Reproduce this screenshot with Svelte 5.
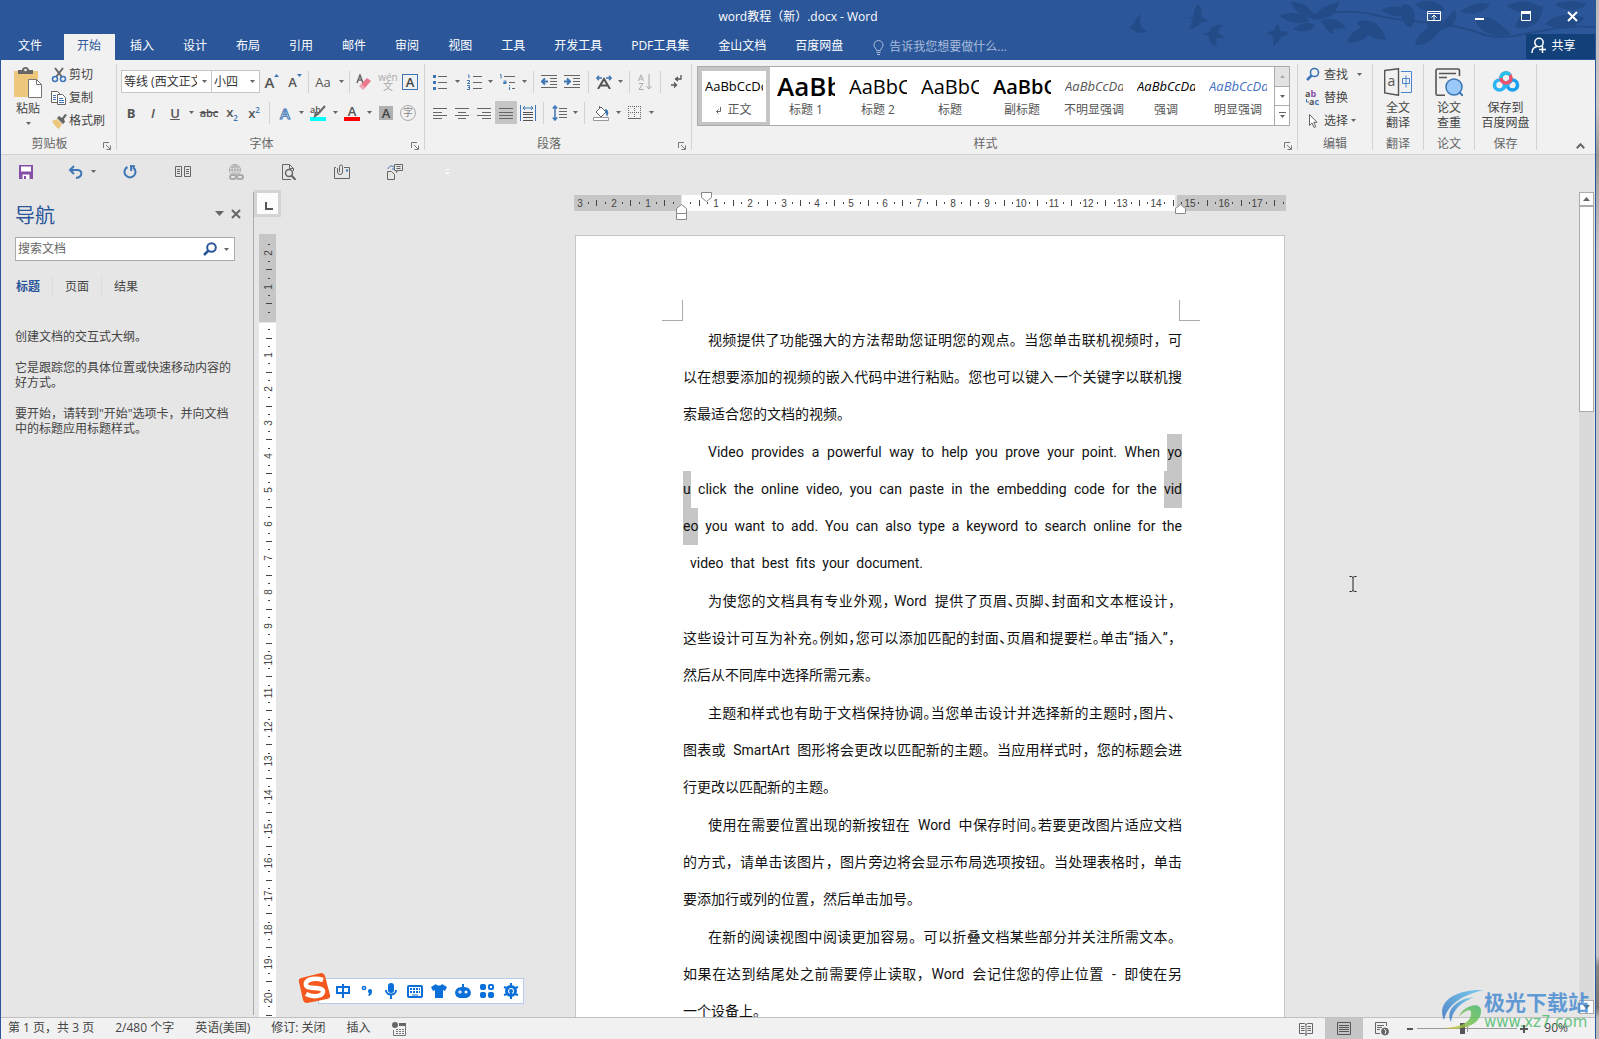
<script>
  const tabs = ['插入', '设计', '布局', '引用', '邮件', '审阅', '视图', '工具', '开发工具', 'PDF工具集', '金山文档', '百度网盘'];

  const styles = [
    { label: '正文', sample: 'AaBbCcDd', kind: 'normal' },
    { label: '标题 1', sample: 'AaBb', kind: 'h1' },
    { label: '标题 2', sample: 'AaBbC', kind: 'h2' },
    { label: '标题', sample: 'AaBbC', kind: 'h2' },
    { label: '副标题', sample: 'AaBbC', kind: 'sub' },
    { label: '不明显强调', sample: 'AaBbCcDd', kind: 'em soft' },
    { label: '强调', sample: 'AaBbCcDd', kind: 'em' },
    { label: '明显强调', sample: 'AaBbCcDd', kind: 'em blue' }
  ];

  // Pixels per centimetre at 90 % zoom
  const CM = 33.85;

  // Builds quarter dots, half lines and numbers between two positions in cm
  function marks(from, to) {
    const out = [];
    for (let q = Math.ceil(from * 4); q <= to * 4; q++) {
      if (q === 0) continue;
      const kind = q % 4 === 0 ? 'num' : q % 2 === 0 ? 'line' : 'dot';
      out.push({ at: Math.round((q / 4) * CM), kind, n: Math.abs(q / 4) });
    }
    return out;
  }
  const hMarks = marks(-3.05, 17.8);
  const vMarks = marks(-2.3, 24);

  // ~x~ marks half-width punctuation, [x] marks selected text
  const paragraphs = [
    [
      '视频提供了功能强大的方法帮助您证明您的观点。当您单击联机视频时，可',
      '以在想要添加的视频的嵌入代码中进行粘贴。您也可以键入一个关键字以联机搜',
      '索最适合您的文档的视频。'
    ],
    [
      'Video provides a powerful way to help you prove your point. When [yo]',
      '[u] click the online video, you can paste in the embedding code for the [vid]',
      '[eo] you want to add. You can also type a keyword to search online for the',
      '  video  that  best  fits  your  document.'
    ],
    [
      '为使您的文档具有专业外观~，~ Word  提供了页眉~、~页脚~、~封面和文本框设计，',
      '这些设计可互为补充~。~例如~，~您可以添加匹配的封面~、~页眉和提要栏~。~单击“插入”，',
      '然后从不同库中选择所需元素。'
    ],
    [
      '主题和样式也有助于文档保持协调~。~当您单击设计并选择新的主题时~，~图片、',
      '图表或  SmartArt  图形将会更改以匹配新的主题。当应用样式时，您的标题会进',
      '行更改以匹配新的主题。'
    ],
    [
      '使用在需要位置出现的新按钮在  Word  中保存时间~。~若要更改图片适应文档',
      '的方式，请单击该图片，图片旁边将会显示布局选项按钮。当处理表格时，单击',
      '要添加行或列的位置，然后单击加号。'
    ],
    [
      '在新的阅读视图中阅读更加容易。可以折叠文档某些部分并关注所需文本。',
      '如果在达到结尾处之前需要停止读取，Word  会记住您的停止位置  -  即使在另',
      '一个设备上。'
    ]
  ];

  function parse(line) {
    return line
      .split(/(~.~|\[[^\]]+\])/)
      .filter((s) => s !== '')
      .map((s) => {
        if (s[0] === '~') return { t: s[1], c: 'half' };
        if (s[0] === '[') return { t: s.slice(1, -1), c: 'sel' };
        return { t: s, c: '' };
      });
  }
</script>

{#snippet arrow()}
  <svg class="arr" width="5" height="3" viewBox="0 0 5 3" aria-hidden="true"><path d="M0 0h5L2.500 3z" fill="#666" /></svg>
{/snippet}

{#snippet launcher()}
  <button class="launch" aria-label="更多设置">
    <svg width="8" height="8" viewBox="0 0 8 8"><path d="M.5 6V.5H6M3 3l4 4M7.500 3.500v4h-4" fill="none" stroke="#777" /></svg>
  </button>
{/snippet}

{#snippet lines(a, b, c, d)}
  <svg width="16" height="14" viewBox="0 0 16 14" stroke="#666"><path d={`M${a}M${b}M${c}M${d}`} fill="none" /></svg>
{/snippet}

<div class="screen">
  <div class="window">
    <header>
      <svg class="decor" width="480" height="60" viewBox="0 0 480 60" fill="#234b87" aria-hidden="true">
        <path d="M14 27c5 0 6-9 12-13-2 7-1 10 1 14l5 4-7 1-4-1z" />
        <path d="M72 17l7 0c-1-5 1-10 4-13 4 6 4 9 3 13l8 4-8 1c-3 5-7 6-12 7 3-4 2-8 4-10z" />
        <path d="M87 34l7-2c2-5 6-8 14-7-5 4-5 6-4 9l6 4-8 0c-2 4-1 6 1 9-7-2-9-6-9-11z" />
        <path d="M151 33l8-3c1-2 1-4 3-6 3 3 3 4 3 7l8 1-1 3-6 2c-2 4-4 7-8 9 0-5 1-8-1-11z" />
        <path d="M174 18c30-4 60-10 86-3 40 10 70 4 110 20 30 8 60-12 110-8" fill="none" stroke="#234b87" stroke-width="2" />
        <path d="M198 20c6-16 20-14 26-19-2 14-10 18-26 19zM176 2c14 0 22 8 24 17-12-2-20-6-24-17zM165 16c10-6 24-2 30 5-12 4-22 2-30-5zM205 22c10-6 20-2 26 6-12 2-20 0-26-6zM178 29c6-6 16-8 22-4-4 7-14 8-22 4zM208 20c8-3 12 6 10 14-7-3-9-8-10-14z" />
        <path d="M242 22c12-4 24 0 29 18-16-1-24-8-29-18zM232 42c4-12 14-16 24-14-2 10-12 16-24 14zM266 10c10-6 24-4 33 2-10 6-22 6-33-2zM288 4c10 0 16 10 8 24-10-4-12-14-8-24z" />
        <path d="M300 45c2-10 10-18 18-16 0 10-8 18-18 16zM308 44c8-14 0-24 14-32 10 8 6 24-14 32zM318 30c10-4 16-16 22-20 6 10-6 22-22 20zM300 4c12-6 24-4 30 6-12 4-22 2-30-6zM360 20c12-8 24 2 36 14-16 4-30 0-36-14zM345 12c10-8 20-10 30-8-6 8-16 12-30 8z" />
        <path d="M400 28c4-14 14-22 28-22 0 14-10 24-28 22zM392 6c10-6 22-6 32 0-10 8-22 8-32 0zM430 24c10-10 26-12 40-6-10 10-24 14-40 6zM440 4c10-4 22-4 32 0-8 8-22 8-32 0z" />
      </svg>
      <div class="titlebar">
        <h1>word教程（新）.docx - Word</h1>
        <div class="winbtns">
          <button aria-label="功能区显示选项"><svg width="14" height="12" viewBox="0 0 14 12" fill="none" stroke="#fff"><path d="M.5 1.500h13v9H.5zM.5 3.500h13M7 10V5.500M4.500 7.500L7 5l2.500 2.500" /></svg></button>
          <button aria-label="最小化"><svg width="10" height="12" viewBox="0 0 10 12"><path d="M0 8h9v2H0z" fill="#fff" /></svg></button>
          <button aria-label="最大化"><svg width="11" height="11" viewBox="0 0 11 11"><path d="M.5.5h9v9h-9zM0 2h10" fill="none" stroke="#fff" /><path d="M0 0h10v3H0z" fill="#fff" /></svg></button>
          <button aria-label="关闭"><svg width="11" height="11" viewBox="0 0 11 11"><path d="M1 1l9 9M10 1l-9 9" stroke="#fff" stroke-width="2" /></svg></button>
        </div>
      </div>
      <nav class="tabs">
        <button class="tab file">文件</button>
        <button class="tab active">开始</button>
        {#each tabs as t}<button class="tab">{t}</button>{/each}
        <button class="tell">
          <svg width="11" height="15" viewBox="0 0 11 15" fill="none" stroke="#a9bcdb"><path d="M3.500 10.500c0-2-2.500-3-2.500-5.500a4.500 4.500 0 0 1 9 0c0 2.500-2.500 3.500-2.500 5.500zM3.500 12.500h4M4 14.500h3" /></svg>
          告诉我您想要做什么...
        </button>
        <button class="share">
          <svg width="16" height="17" viewBox="0 0 16 17" fill="none" stroke="#fff" stroke-width="1.500"><circle cx="8" cy="5.500" r="4.200" /><path d="M1 16c0-4 2-6 5-6.500M11.500 9v7M8 12.500h7" /></svg>
          共享
        </button>
      </nav>
    </header>

    <section class="ribbon" aria-label="功能区">
      <div class="group clipboard">
        <div class="body cols">
          <button class="paste">
            <svg width="30" height="32" viewBox="0 0 30 32"><path d="M1 4h24v26H1z" fill="#edc77b" /><path d="M5 7V3h4c0-4 7-4 7 0h4v4z" fill="#666" /><circle cx="12.500" cy="3" r="1.300" fill="#f1f1f1" /><path d="M15.500 12.500h8l5 5v13h-13z" fill="#fff" stroke="#777" /><path d="M23.500 12.500v5h5" fill="none" stroke="#777" /></svg>
            <span>粘贴</span>
            {@render arrow()}
          </button>
          <div class="stack">
            <button><svg width="16" height="16" viewBox="0 0 16 16" fill="none"><path d="M4 1l7 9M12 1L5 10" stroke="#666" stroke-width="2" /><circle cx="4" cy="12" r="2.500" stroke="#3d76b5" stroke-width="1.500" /><circle cx="12" cy="12" r="2.500" stroke="#3d76b5" stroke-width="1.500" /></svg>剪切</button>
            <button><svg width="16" height="16" viewBox="0 0 16 16" fill="#fff" stroke="#666"><path d="M.5 1.500h6l3 3v8h-9z" /><path d="M6.500 4.500h5l3 3v7h-8z" /><path d="M8 8.500h4M8 10.500h5M8 12.500h5M2 5.500h3M2 7.500h3M2 9.500h3" stroke="#3d76b5" /></svg>复制</button>
            <button><svg width="16" height="16" viewBox="0 0 16 16"><path d="M1 8l5-2 5 5-3 5c-2-1-5-4-7-8z" fill="#edc77b" /><path d="M6 5l2-2 3 2 3-4 2 1-3 4 1 3-2 2z" fill="#666" /></svg>格式刷</button>
          </div>
        </div>
        <footer><span>剪贴板</span>{@render launcher()}</footer>
      </div>

      <div class="group font">
        <div class="body rows">
          <div class="row">
            <label class="combo w-font"><select aria-label="字体"><option>等线 (西文正文)</option></select>{@render arrow()}</label>
            <label class="combo w-size"><select aria-label="字号"><option>小四</option></select>{@render arrow()}</label>
            <button class="w24" aria-label="增大字号"><span class="glyph g15">A</span><svg class="sup" width="5" height="3" viewBox="0 0 5 3"><path d="M0 3h5L2.500 0z" fill="#3d76b5" /></svg></button>
            <button class="w22" aria-label="缩小字号"><span class="glyph g13">A</span><svg class="sup" width="5" height="3" viewBox="0 0 5 3"><path d="M0 0h5L2.500 3z" fill="#3d76b5" /></svg></button>
            <i class="sep tight"></i>
            <button class="w24"><span class="glyph g13 plain">Aa</span></button><span class="w12">{@render arrow()}</span>
            <i class="sep tight"></i>
            <button class="w24" aria-label="清除格式"><svg width="16" height="16" viewBox="0 0 16 16"><path d="M1 9L4 1l3 8M2 6h4" stroke="#666" fill="none" stroke-width="1.500" /><path d="M5 10l6-6 4 3-6 7z" fill="#e8788c" /><path d="M3 12l2-2 4 4-2 2z" fill="#f0a0ae" /></svg></button>
            <button class="w24 wen" aria-label="拼音指南"><span>wén</span><span>文</span></button>
            <button class="w20" aria-label="字符边框"><span class="boxed">A</span></button>
          </div>
          <div class="row">
            <button class="w20"><b class="glyph g13">B</b></button>
            <button class="w24"><i class="glyph g13">I</i></button>
            <button class="w20"><u class="glyph g13">U</u></button><span class="w12">{@render arrow()}</span>
            <button class="w24"><s class="glyph g11">abc</s></button>
            <button class="w22"><span class="glyph g13">x<sub>2</sub></span></button>
            <button class="w22"><span class="glyph g13">x<sup>2</sup></span></button>
            <i class="sep"></i>
            <button class="w22"><span class="glyph g15 outline">A</span></button><span class="w10">{@render arrow()}</span>
            <button class="w24" aria-label="突出显示"><svg width="16" height="16" viewBox="0 0 16 16"><path d="M0 12h16v4H0z" fill="#0ff" /><text x="0" y="8" class="tiny">ab</text><path d="M15 1L8 9l-3 2 1-4" stroke="#666" stroke-width="2" fill="none" /></svg></button><span class="w10">{@render arrow()}</span>
            <button class="w24 fontcolor" aria-label="字体颜色"><span class="glyph g13">A</span></button><span class="w10">{@render arrow()}</span>
            <button class="w24"><span class="shaded">A</span></button>
            <button class="w20"><span class="circled">字</span></button>
          </div>
        </div>
        <footer><span>字体</span>{@render launcher()}</footer>
      </div>

      <div class="group para">
        <div class="body rows">
          <div class="row">
            <button class="w22" aria-label="项目符号"><svg width="14" height="16" viewBox="0 0 14 16"><path d="M0 1h3v3H0zM0 7h3v3H0zM0 13h3v3H0z" fill="#3d76b5" /><path d="M5 2.500h9M5 8.500h9M5 14.500h9" stroke="#666" /></svg></button><span class="w12">{@render arrow()}</span>
            <button class="w22" aria-label="编号"><svg width="15" height="16" viewBox="0 0 15 16"><path d="M1 1h1v3M0 6.500h2.500v1.500L.5 9.500h2.500M0 11.500h2.500v4H0M1 13.500h1" stroke="#3d76b5" fill="none" /><path d="M6 2.500h9M6 8.500h9M6 14.500h9" stroke="#666" /></svg></button><span class="w10">{@render arrow()}</span>
            <button class="w24" aria-label="多级列表"><svg width="16" height="16" viewBox="0 0 16 16"><path d="M1 .5h1v4M4.500 7h2.500v2.500H4.500V8.500H7M10.500 11v1M10.500 13v3" stroke="#3d76b5" fill="none" /><path d="M5 2.500h11M10 8.500h6M13 14.500h3" stroke="#666" /></svg></button><span class="w10">{@render arrow()}</span>
            <i class="sep"></i>
            <button class="w22" aria-label="减少缩进"><svg width="16" height="13" viewBox="0 0 16 13"><path d="M0 .5h16M9 3.500h7M9 6.500h7M9 9.500h7M0 12.500h16" stroke="#666" /><path d="M7 6.500H1M4 3.500L1 6.500l3 3" stroke="#3d76b5" stroke-width="2" fill="none" /></svg></button>
            <button class="w24" aria-label="增加缩进"><svg width="16" height="13" viewBox="0 0 16 13"><path d="M0 .5h16M9 3.500h7M9 6.500h7M9 9.500h7M0 12.500h16" stroke="#666" /><path d="M0 6.500h6M3 3.500l3 3-3 3" stroke="#3d76b5" stroke-width="2" fill="none" /></svg></button>
            <i class="sep"></i>
            <button class="w22" aria-label="中文版式"><svg width="16" height="14" viewBox="0 0 16 14"><path d="M2 14L8 4l6 10M4.500 10.500h7" stroke="#555" stroke-width="2" fill="none" /><path d="M6 3H1M3 .8L.8 3 3 5.200M10 3h5M13 .8L15.200 3 13 5.200" stroke="#3d76b5" stroke-width="1.500" fill="none" /></svg></button><span class="w10">{@render arrow()}</span>
            <i class="sep"></i>
            <button class="w22" aria-label="排序"><svg width="14" height="16" viewBox="0 0 14 16" stroke="#aaa" fill="none"><path d="M.5 7L3 .8 5.500 7M1.500 5h3M1 9.500h4L1 15.500h4.500M11 0v15M8.500 12L11 15l2.500-3" /></svg></button>
            <i class="sep"></i>
            <button class="w22" aria-label="显示编辑标记"><svg width="11" height="13" viewBox="0 0 11 13" stroke="#555" fill="none" stroke-width="1.300"><path d="M10 0v4H5M7 2L4.500 4 7 6M0 10h5M3 7.500L5.500 10 3 12.500" /></svg></button>
          </div>
          <div class="row">
            <button class="w22" aria-label="左对齐">{@render lines('1 2.500h14', '1 6.500h9', '1 9.500h14', '1 12.500h9')}</button>
            <button class="w22" aria-label="居中">{@render lines('1 2.500h14', '4 6.500h8', '1 9.500h14', '4 12.500h8')}</button>
            <button class="w22" aria-label="右对齐">{@render lines('1 2.500h14', '6 6.500h9', '1 9.500h14', '6 12.500h9')}</button>
            <button class="w22 on" aria-label="两端对齐">{@render lines('1 2.500h14', '1 6.500h14', '1 9.500h14', '1 12.500h14')}</button>
            <button class="w22" aria-label="分散对齐"><svg width="16" height="16" viewBox="0 0 16 16"><path d="M.5 0v16M15.500 0v16M3 3h10M5 1L3 3l2 2M11 1l2 2-2 2" stroke="#3d76b5" fill="none" /><path d="M3 7.500h10M3 9.500h10M3 12.500h10M3 15.500h10" stroke="#555" /></svg></button>
            <i class="sep"></i>
            <button class="w22" aria-label="行距"><svg width="15" height="16" viewBox="0 0 15 16"><path d="M3 1v14M.8 3.500L3 1l2.200 2.500M.8 12.500L3 15l2.200-2.500" stroke="#3d76b5" stroke-width="1.500" fill="none" /><path d="M7 3.500h8M7 6.500h8M7 9.500h8M7 12.500h8" stroke="#666" /></svg></button><span class="w10">{@render arrow()}</span>
            <i class="sep"></i>
            <button class="w24" aria-label="底纹"><svg width="16" height="16" viewBox="0 0 16 16"><path d="M3 7l5-5 5 5-5 5zM6.500 4V1" fill="#fff" stroke="#666" /><path d="M12 4c4 1 4 4 2 8-1-3-1-4-2-5z" fill="#3d76b5" /><path d="M.5 12.500h15v3H.5z" fill="#fff" stroke="#999" /></svg></button><span class="w10">{@render arrow()}</span>
            <button class="w22" aria-label="边框"><svg width="13" height="13" viewBox="0 0 13 13" fill="none" stroke="#666"><path d="M.5 0v12M12.500 0v12M6.500 0v12M0 .5h13M0 6.500h13" stroke-dasharray="1 1" /><path d="M0 12.500h13" /></svg></button><span class="w12">{@render arrow()}</span>
          </div>
        </div>
        <footer><span>段落</span>{@render launcher()}</footer>
      </div>

      <div class="group stylesgrp">
        <div class="gallery">
          {#each styles as s, i}
            <button class="style" class:selected={i === 0}>
              <span class={'sample ' + s.kind}>{s.sample}</span>
              <span class="name">{#if i === 0}<svg width="6" height="7" viewBox="0 0 6 7" fill="none" stroke="#666"><path d="M4.500 0v4.500H1M2.500 2.500l-2 2 2 2" /></svg>{/if}{s.label}</span>
            </button>
          {/each}
          <div class="scroller">
            <button disabled aria-label="上一行"><svg width="5" height="3" viewBox="0 0 5 3"><path d="M0 3h5L2.500 0z" fill="#aaa" /></svg></button>
            <button aria-label="下一行">{@render arrow()}</button>
            <button aria-label="其他样式"><svg width="7" height="7" viewBox="0 0 7 7"><path d="M0 .5h7" stroke="#666" /><path d="M1 3h5L3.500 6z" fill="#666" /></svg></button>
          </div>
        </div>
        <footer><span>样式</span>{@render launcher()}</footer>
      </div>

      <div class="group edit">
        <div class="body stack">
          <button><svg width="16" height="16" viewBox="0 0 16 16" fill="none" stroke="#3d76b5"><circle cx="9.500" cy="5.500" r="4" stroke-width="1.600" /><path d="M6.500 8.500L2 13" stroke-width="2.500" /></svg>查找<span class="gap">{@render arrow()}</span></button>
          <button><svg width="16" height="16" viewBox="0 0 16 16"><text x="0" y="7" class="swap">a<tspan fill="#8a4fa8">b</tspan></text><text x="4" y="15" class="swap">a<tspan fill="#3d76b5">c</tspan></text><path d="M1.500 9v3H4" stroke="#3d76b5" fill="none" /></svg>替换</button>
          <button><svg width="16" height="16" viewBox="0 0 16 16"><path d="M4.500 1.500v11l2.500-2.500 2 4.500 1.800-.8-2-4.400H12z" fill="#fff" stroke="#666" /></svg>选择{@render arrow()}</button>
        </div>
        <footer><span>编辑</span></footer>
      </div>

      <div class="group g51">
        <button class="tall">
          <svg width="28" height="28" viewBox="0 0 28 28" fill="none"><path d="M.7 2.500L14.500.7v26.600L.7 25z" stroke="#555" stroke-width="1.400" /><path d="M17 3.500h10.500v21H17" stroke="#4a86cf" /><path d="M18.500 10.500h7v5h-7zM22 7.500v12" stroke="#4a86cf" /><text x="3.500" y="18" class="abig">a</text></svg>
          <span>全文<br />翻译</span>
        </button>
        <footer><span>翻译</span></footer>
      </div>
      <div class="group g51">
        <button class="tall">
          <svg width="28" height="28" viewBox="0 0 28 28" fill="none"><path d="M10 27.200H2.500q-1.500 0-1.500-1.500V2.500Q1 1 2.500 1H23q1.500 0 1.500 1.500V8" stroke="#555" stroke-width="1.600" /><path d="M4 5.500h17M4 9.500h8" stroke="#555" stroke-width="1.600" /><circle cx="19" cy="19" r="8" fill="#9ac8f8" stroke="#3d76b5" stroke-width="1.500" /><path d="M24 24l4 4" stroke="#3d76b5" stroke-width="2" /></svg>
          <span>论文<br />查重</span>
        </button>
        <footer><span>论文</span></footer>
      </div>
      <div class="group g62">
        <button class="tall">
          <svg width="28" height="28" viewBox="0 0 28 28" fill="none" stroke-width="3.600"><circle cx="7.500" cy="17" r="5" stroke="#2bb5f5" /><circle cx="20.500" cy="17" r="5" stroke="#1aa0f0" /><path d="M11 20.500L19 13" stroke="#2bb5f5" /><circle cx="14" cy="10" r="5" stroke="#f0506a" /><path d="M9 10a5 5 0 0 1 9-3" stroke="#27c0e8" /></svg>
          <span>保存到<br />百度网盘</span>
        </button>
        <footer><span>保存</span></footer>
      </div>
      <button class="collapse" aria-label="折叠功能区"><svg width="9" height="6" viewBox="0 0 9 6"><path d="M.8 5.200l3.700-4 3.700 4" fill="none" stroke="#666" stroke-width="2" /></svg></button>
    </section>

    <div class="qat">
      <button class="first" aria-label="保存"><svg width="14" height="14" viewBox="0 0 14 14"><path d="M0 0h14v14H0z" fill="#8650a6" /><path d="M2 1.500h10v5H2zM3.500 9.500h7V14h-7z" fill="#fff" /><path d="M5 11h2v3H5z" fill="#8650a6" /></svg></button>
      <button class="undo" aria-label="撤消"><svg width="15" height="14" viewBox="0 0 15 14" fill="none" stroke="#3d76b5" stroke-width="2"><path d="M6 1L2 5l4 4M2 5h7c6 0 6 7-1 8" /></svg><span>{@render arrow()}</span></button>
      <button aria-label="重复"><svg width="14" height="14" viewBox="0 0 14 14" fill="none" stroke="#3d76b5" stroke-width="2"><path d="M4.500 2A5.500 5.500 0 1 0 10 2.300" /><path d="M7 1.200h5M8.200 0v6" /></svg></button>
      <button aria-label="双页"><svg width="16" height="12" viewBox="0 0 16 12" fill="none" stroke="#666"><path d="M.5.5h6v10h-6zM9.500.5h6v10h-6zM2 3.500h3M2 5.500h3M2 7.500h3M11 3.500h3M11 5.500h3M11 7.500h3" /></svg></button>
      <button aria-label="超链接"><svg width="16" height="16" viewBox="0 0 16 16" fill="none" stroke="#aaa"><circle cx="7" cy="6" r="5.500" /><path d="M1.500 6h11M7 .5v11M2.500 3h9M7 .5c-4 3-4 8 0 11M7 .5c4 3 4 8 0 11" /><rect x="2" y="11" width="6" height="4" rx="2" stroke-width="2" fill="#e6e6e6" /><rect x="9" y="11" width="6" height="4" rx="2" stroke-width="2" fill="#e6e6e6" /></svg></button>
      <button aria-label="打印预览"><svg width="14" height="16" viewBox="0 0 14 16" fill="none" stroke="#666"><path d="M9 15.500H.5V.5h7l4 4V7M7.500.5v4h4" /><circle cx="7" cy="9" r="3.500" stroke-width="1.500" /><path d="M9.500 11.500L13.500 16" stroke-width="2" /></svg></button>
      <button aria-label="附件"><svg width="16" height="15" viewBox="0 0 16 15" fill="none" stroke="#666"><path d="M2 3.500H.5v11h15v-11H10" /><path d="M3.500 4v4a2.500 2.500 0 0 0 5 0V2.500a1.500 1.500 0 0 0-3 0V8" /><path d="M12 5.500h2v2h-2z" fill="#3d76b5" stroke="none" /></svg></button>
      <button aria-label="发送"><svg width="16" height="16" viewBox="0 0 16 16" fill="none" stroke="#666"><path d="M.5 7.500h4l3 3v5h-7zM7.500.5h8v6h-5l-1 2v-2h-2zM9.500 2.500h4M9.500 4.500h4" /><path d="M1 5c1-3 3-4 6-2M5 5h3" stroke="#3d76b5" /></svg></button>
      <button aria-label="自定义"><svg width="5" height="6" viewBox="0 0 5 6"><path d="M0 0h5v1H0zM0 3h5L2.500 6z" fill="#f8f8f8" /></svg></button>
    </div>

    <main>
      <aside>
        <div class="navhead">
          <h2>导航</h2>
          <button aria-label="任务窗格选项"><svg width="9" height="5" viewBox="0 0 9 5"><path d="M0 0h9L4.500 5z" fill="#666" /></svg></button>
          <button aria-label="关闭导航"><svg width="10" height="10" viewBox="0 0 10 10"><path d="M1 1l8 8M9 1L1 9" stroke="#666" stroke-width="2" /></svg></button>
        </div>
        <div class="search">
          <input type="text" placeholder="搜索文档" aria-label="搜索文档" />
          <button aria-label="搜索"><svg width="14" height="14" viewBox="0 0 14 14" fill="none" stroke="#2b579a"><circle cx="8.500" cy="5.500" r="4.300" stroke-width="2" /><path d="M5.500 8.500L1 13" stroke-width="2.500" /></svg></button>
          <button aria-label="搜索选项">{@render arrow()}</button>
        </div>
        <div class="navtabs"><button class="cur">标题</button><button>页面</button><button>结果</button></div>
        <div class="hint">
          <p>创建文档的交互式大纲。</p>
          <p>它是跟踪您的具体位置或快速移动内容的好方式。</p>
          <p>要开始，请转到"开始"选项卡，并向文档中的标题应用标题样式。</p>
        </div>
      </aside>

      <div class="vcol">
        <button class="tabstop" aria-label="制表符"><svg width="8" height="8" viewBox="0 0 8 8"><path d="M1 0v7h7" fill="none" stroke="#555" stroke-width="2" /></svg></button>
        <svg class="vruler" width="17" height="900" viewBox="0 0 17 900" aria-hidden="true">
          <path d="M0 0h17v88H0z" fill="#c6c6c6" /><path d="M0 89h17v811H0z" fill="#fff" />
          <g transform="translate(10 87)">
            {#each vMarks as m}
              {#if m.kind === 'num'}<text class="rnum" transform={`translate(3 ${m.at}) rotate(-90)`} text-anchor="middle">{m.n}</text>
              {:else if m.kind === 'line'}<path d={`M-3 ${m.at}.5h6`} stroke="#444" />
              {:else}<path d={`M-1 ${m.at}.5h2`} stroke="#444" />{/if}
            {/each}
          </g>
        </svg>
      </div>

      <div class="canvas">
        <svg class="hruler" width="712" height="32" viewBox="0 0 712 32" aria-hidden="true">
          <path d="M0 5h712v16H0z" fill="#c6c6c6" /><path d="M107 5h496v16H107z" fill="#e6e6e6" /><path d="M108 5h493v16H108z" fill="#fff" />
          <g transform="translate(108 13)">
            {#each hMarks as m}
              {#if m.kind === 'num'}<text class="rnum" x={m.at} y="4" text-anchor="middle">{m.n}</text>
              {:else if m.kind === 'line'}<path d={`M${m.at}.5-3v6`} stroke="#444" />
              {:else}<path d={`M${m.at}.5-1v2`} stroke="#444" />{/if}
            {/each}
          </g>
          <g fill="#fff" stroke="#888"><path d="M127.500 2.500h10v5l-5 4-5-4zM102.500 23.500v-5l5-4 5 4v5zM102.500 23.500h10v6h-10zM601.500 23.500v-5l5-4 5 4v5z" /></g>
        </svg>
        <article>
          <div class="corners"><i class="tl"></i><i class="tr"></i></div>
          <div class="doc">
            {#each paragraphs as p}
              <p>
                {#each p as line, i}<span class="line" class:last={i === p.length - 1}>{#each parse(line) as part}<span class={part.c}>{part.t}</span>{/each}</span>{/each}
              </p>
            {/each}
          </div>
        </article>
      </div>

      <div class="scrollbar">
        <button aria-label="向上滚动"><svg width="7" height="4" viewBox="0 0 7 4"><path d="M0 4h7L3.500 0z" fill="#666" /></svg></button>
        <div class="thumb"></div>
        <button class="down" aria-label="向下滚动"><svg width="7" height="4" viewBox="0 0 7 4"><path d="M0 0h7L3.500 4z" fill="#666" /></svg></button>
      </div>
    </main>

    <div class="status">
      <span>第 1 页，共 3 页</span><span>2/480 个字</span><span>英语(美国)</span><span>修订: 关闭</span><span>插入</span>
      <svg width="14" height="14" viewBox="0 0 14 14"><path d="M7 1.500h6.500v12h-12V8" fill="none" stroke="#777" /><path d="M7 1h7v3H7z" fill="#666" /><circle cx="3" cy="3" r="3" fill="#666" /><path d="M4 7.500h8M4 9.500h8M4 11.500h8" stroke="#777" stroke-dasharray="2 1" /></svg>
      <div class="right">
        <div class="views">
          <button aria-label="阅读视图"><svg width="14" height="14" viewBox="0 0 14 14" fill="none" stroke="#666"><path d="M.5 1.500h5l1.500 1 1.500-1h5v10h-5l-1.500 1-1.500-1h-5zM7 2v12M2 4.500h3.500M2 6.500h3.500M2 8.500h3.500M8.500 4.500H12M8.500 6.500H12M8.500 8.500H12" /></svg></button>
          <button class="on" aria-label="页面视图"><svg width="14" height="13" viewBox="0 0 14 13" fill="none" stroke="#555"><path d="M.5.5h13v12H.5zM2 3.500h10M2 5.500h10M2 7.500h10M2 9.500h10" /></svg></button>
          <button aria-label="Web 视图"><svg width="14" height="14" viewBox="0 0 14 14" fill="none" stroke="#666"><path d="M5 11.500H.5V.5h11V4M2 3.500h7M2 5.500h5M2 7.500h3" /><circle cx="10" cy="9.500" r="3.500" fill="#666" /><path d="M9 7l2 2-1 3" stroke="#f1f1f1" /></svg></button>
        </div>
        <button class="zoombtn" aria-label="缩小"><svg width="8" height="8" viewBox="0 0 8 8"><path d="M1 3h6v2H1z" fill="#555" /></svg></button>
        <input class="zoom" type="range" min="0" max="100" value="45" aria-label="缩放" />
        <button class="zoombtn" aria-label="放大"><svg width="8" height="8" viewBox="0 0 8 8"><path d="M0 3h3V0h2v3h3v2H5v3H3V5H0z" fill="#555" /></svg></button>
        <button class="pct">90%</button>
      </div>
    </div>
  </div>
  <div class="behind"></div>

  <svg class="caret" width="8" height="16" viewBox="0 0 8 16" fill="none" stroke="#222"><path d="M.5.5h2l1.500 1 1.500-1h2M4 1.500v13M.5 15.500h2l1.500-1 1.500 1h2" /></svg>

  <div class="ime">
    <svg class="sogou" width="34" height="32" viewBox="0 0 34 32"><path d="M3 6q-3 1-2 4l4 18q1 3 4 3l20-4q4-1 3-4L27 4q-1-3-4-3z" fill="#f4581f" /><path d="M25 8C15 5 7 8 8 13s16 1 17 6-9 7-17 3" fill="none" stroke="#fff" stroke-width="4.500" /></svg>
    <div class="imebar">
      <button aria-label="中英文切换"><svg width="16" height="16" viewBox="0 0 16 16" fill="none" stroke="#0a6fd8" stroke-width="2"><path d="M2 4h12v6H2zM8 1v14" /></svg></button>
      <button aria-label="标点"><svg width="16" height="16" viewBox="0 0 16 16"><circle cx="5" cy="5" r="1.600" fill="none" stroke="#0a6fd8" stroke-width="1.500" /><path d="M9 8a2 2 0 1 1 4 0c0 3-1 4-3 5l-1-1c1-1 1-1 1-2q-1 0-1-2z" fill="#0a6fd8" /></svg></button>
      <button aria-label="语音"><svg width="16" height="16" viewBox="0 0 16 16" fill="none" stroke="#0a6fd8" stroke-width="2"><rect x="5" y="0" width="6" height="10" rx="3" fill="#0a6fd8" stroke="none" /><path d="M3 7c0 6 10 6 10 0M8 12v4" /></svg></button>
      <button aria-label="键盘"><svg width="16" height="16" viewBox="0 0 16 16"><rect x="1" y="3" width="14" height="11" rx="1" fill="none" stroke="#0a6fd8" stroke-width="2" /><path d="M3 6h10M3 9h10" stroke="#0a6fd8" stroke-width="2" stroke-dasharray="2 1" /><path d="M5 12h6" stroke="#0a6fd8" /></svg></button>
      <button aria-label="皮肤"><svg width="16" height="16" viewBox="0 0 16 16"><path d="M5 1c1 2 5 2 6 0l5 3-2 4-2-1v8H4V7L2 8 0 4z" fill="#0a6fd8" /></svg></button>
      <button aria-label="助手"><svg width="16" height="16" viewBox="0 0 16 16"><path d="M7 4V1h2v3c9 0 9 11 1 11H6C-2 15-2 4 7 4z" fill="#0a6fd8" /><path d="M3 9h4M5 7v4" stroke="#fff" /><circle cx="11" cy="9" r="1.500" fill="#fff" /></svg></button>
      <button aria-label="工具箱"><svg width="16" height="16" viewBox="0 0 16 16" fill="#0a6fd8"><rect x="1" y="1" width="6" height="6" rx="2" /><rect x="1" y="9" width="6" height="6" rx="2" /><rect x="9" y="9" width="6" height="6" rx="2" /><rect x="10" y="2" width="4" height="4" rx="1" fill="none" stroke="#0a6fd8" stroke-width="2" /></svg></button>
      <button aria-label="设置"><svg width="16" height="16" viewBox="0 0 16 16"><circle cx="8" cy="8" r="4.500" fill="none" stroke="#0a6fd8" stroke-width="3" /><path d="M8 0v3M1 4l3 1M15 4l-3 1M1 12l3-1M15 12l-3-1M8 8v8" stroke="#0a6fd8" stroke-width="2" /><circle cx="8" cy="8" r="2" fill="#0a6fd8" /></svg></button>
    </div>
  </div>

  <div class="mark">
    <svg width="44" height="42" viewBox="0 0 44 42"><defs><linearGradient id="mb" x1="0" y1="1" x2="1" y2="0"><stop offset="0" stop-color="#2f6dc0" /><stop offset="1" stop-color="#5cc4f0" /></linearGradient><linearGradient id="mg" x1="0" y1="1" x2="1" y2="0"><stop offset="0" stop-color="#f0c93a" /><stop offset=".5" stop-color="#6cc04a" /><stop offset="1" stop-color="#3fb86a" /></linearGradient></defs><path d="M4 31C-4 14 14 0 43 1 24 6 8 14 4 31z" fill="url(#mb)" /><path d="M11 33C5 22 16 10 34 8 20 14 12 22 11 33z" fill="url(#mb)" /><path d="M4 39c18-1 28-6 27-16-1-4-8 0-12 5 2-10 21-17 22-7C42 34 26 42 4 39z" fill="url(#mg)" /></svg>
    <div><strong>极光下载站</strong><span>www.xz7.com</span></div>
  </div>
</div>

<style>
  :global(body) { margin: 0; }
  .screen { position: relative; display: flex; height: 100vh; overflow: hidden; font: 12px/16px "Open Sans", "Noto Sans CJK SC", sans-serif; color: #444; }
  .window { flex: 1; min-width: 0; display: flex; flex-direction: column; background: #e6e6e6; border: solid #2b579a; border-width: 0 1px; }
  .behind { flex: 0 0 3px; background: linear-gradient(#bbb, #c9c6c8 10%, #999 15%, #c5c5c9 24%, #c5c5c9 92%, #888 93%, #777 97%, #bbb 98%); }
  button { font: inherit; color: inherit; background: none; border: 0; padding: 0; margin: 0; display: flex; align-items: center; justify-content: center; white-space: nowrap; }
  svg { flex: none; display: block; }
  h1, h2, p { margin: 0; font-weight: 400; }

  header { position: relative; background: #2b579a; color: #fff; flex: none; }
  .decor { position: absolute; right: 0; top: 0; }
  .titlebar { position: relative; height: 34px; display: flex; align-items: center; justify-content: center; }
  h1 { font-size: 12px; }
  .winbtns { position: absolute; right: 0; top: 0; height: 32px; display: flex; }
  .winbtns button { width: 46px; }
  .tabs { position: relative; display: flex; gap: 2px; height: 26px; }
  .tab { padding: 0 14px 3px 13px; }
  .tab.file { padding: 0 20px 3px 17px; }
  .tab.active { background: #f1f1f1; color: #2b579a; }
  .tell { gap: 5px; padding-left: 14px; color: #a9bcdb; }
  .share { margin-left: auto; background: #124078; width: 69px; height: 25px; gap: 4px; padding: 0 14px 2px 0; }

  .ribbon { flex: none; display: flex; height: 94px; background: #f1f1f1; border-bottom: 1px solid #d2d2d2; }
  .group { position: relative; display: flex; flex-direction: column; margin: 4px 0; border-right: 1px solid #d2d2d2; }
  .group footer { display: flex; margin-top: auto; height: 12px; align-items: center; color: #666; }
  .group footer span { flex: 1; text-align: center; }
  .launch { width: 18px; padding-top: 3px; }
  .clipboard { flex: 0 0 115px; }
  .font { flex: 0 0 307px; }
  .para { flex: 0 0 266px; }
  .stylesgrp { flex: 1; min-width: 0; }
  .edit { flex: 0 0 74px; }
  .g51 { flex: 0 0 50px; }
  .g62 { flex: 0 0 61px; }
  .cols { display: flex; padding-left: 12px; gap: 8px; }
  .paste { flex-direction: column; justify-content: flex-start; padding-top: 3px; gap: 2px; width: 30px; }
  .paste span { line-height: 16px; }
  .paste .arr { margin-top: 3px; }
  .stack { display: flex; flex-direction: column; }
  .stack button { height: 23px; gap: 2px; justify-content: flex-start; padding-bottom: 2px; box-sizing: border-box; }
  .edit .stack { padding-left: 7px; }
  .edit .stack button { gap: 3px; }
  .gap { padding-left: 6px; }
  .rows { padding: 2px 0 0 4px; }
  .row { display: flex; height: 31px; align-items: center; }
  .row button { height: 23px; }
  .on { background: #c5c5c5; }
  .w10, .w12, .w20, .w22, .w24 { flex: none; display: flex; align-items: center; justify-content: center; }
  .w10 { width: 10px; } .w12 { width: 12px; } .w20 { width: 20px; } .w22 { width: 22px; } .w24 { width: 24px; }
  .sep { width: 1px; height: 22px; margin: 0 4px; background: #d2d2d2; }
  .sep.tight { margin: 0 2px; }
  .combo { display: grid; height: 23px; box-sizing: border-box; border: 1px solid #c6c6c6; background: #fff; }
  .combo select { grid-area: 1 / 1; appearance: none; border: 0; background: none; font: inherit; color: #333; padding: 0 14px 0 2px; min-width: 0; width: 100%; }
  .combo :global(svg) { grid-area: 1 / 1; justify-self: end; align-self: center; margin-right: 4px; pointer-events: none; }
  .w-font { width: 91px; }
  .w-size { width: 48px; border-left: 0; }
  .glyph { color: #555; font-weight: 600; }
  .glyph.plain { font-weight: 400; }
  b.glyph { font-weight: 700; }
  .g15 { font-size: 15px; } .g13 { font-size: 13px; } .g11 { font-size: 11px; }
  .glyph sub, .glyph sup { font-size: 8px; line-height: 8px; color: #3d76b5; }
  .sup { align-self: flex-start; margin-top: 4px; }
  .outline { color: #fff; -webkit-text-stroke: 1px #3d76b5; }
  .wen { flex-direction: column; color: #aaa; font-size: 10px; line-height: 9px; }
  .boxed { width: 14px; height: 14px; line-height: 14px; border: 1px solid #3d76b5; font-size: 13px; font-weight: 600; }
  .shaded { width: 14px; height: 14px; line-height: 14px; background: #b0b0b0; font-size: 13px; font-weight: 600; }
  .circled { width: 14px; height: 14px; line-height: 13px; border: 1px solid #aaa; border-radius: 50%; font-size: 10px; color: #888; }
  .fontcolor .glyph { width: 16px; height: 12px; line-height: 12px; border-bottom: 4px solid #f00; }
  .tiny { font-size: 9px; font-weight: 600; fill: #555; }
  .swap { font-size: 9px; font-weight: 700; fill: #555; }
  .abig { font-size: 14px; fill: #555; }

  .gallery { display: flex; margin: 2px 7px 0 5px; height: 58px; border: 1px solid #ababab; background: #fff; }
  .style { flex: 1 1 72px; min-width: 0; flex-direction: column; align-items: stretch; justify-content: flex-start; padding: 3px 3px 0; border: 4px solid transparent; border-width: 4px 4px 3px; overflow: hidden; }
  .style.selected { border-color: #c5c5c5; }
  .sample { height: 25px; line-height: 25px; overflow: hidden; text-align: left; color: #000; font-size: 13px; }
  .sample.h1 { font-size: 26px; font-weight: 600; }
  .sample.h2 { font-size: 20px; }
  .sample.sub { font-size: 20px; font-weight: 600; }
  .sample.em { font-style: italic; }
  .sample.soft { color: #555; }
  .sample.blue { color: #4472c4; }
  .name { display: flex; justify-content: center; align-items: center; gap: 5px; margin: 3px -7px 0; color: #555; }
  .scroller { flex: 0 0 14px; display: flex; flex-direction: column; background: #fff; border-left: 1px solid #ababab; }
  .scroller button { flex: 1; }
  .scroller button + button { border-top: 1px solid #ababab; }
  .scroller button:disabled { background: #e3e3e3; }
  .tall { flex-direction: column; gap: 4px; padding-top: 4px; }
  .tall span { line-height: 15px; }
  .collapse { flex: 0 0 58px; align-items: flex-end; justify-content: flex-end; padding: 0 10px 5px 0; box-sizing: border-box; }

  .qat { flex: none; display: flex; height: 33px; }
  .qat button { width: 53px; }
  .qat .first { width: 49px; }
  .qat .undo { width: 53px; justify-content: flex-start; padding-left: 18px; box-sizing: border-box; gap: 8px; }

  main { flex: 1; min-height: 0; display: flex; overflow: hidden; }
  aside { flex: 0 0 253px; box-sizing: border-box; margin: 4px 0 2px; border-right: 1px solid #ababab; padding: 8px 18px 0 14px; }
  .navhead { display: flex; align-items: center; gap: 7px; height: 32px; padding-bottom: 5px; margin-right: -6px; }
  .navhead button { padding-bottom: 5px; }
  h2 { flex: 1; font-size: 20px; color: #2b579a; line-height: 28px; }
  .search { display: flex; height: 22px; border: 1px solid #ababab; background: #fff; }
  .search input { flex: 1; min-width: 0; border: 0; background: none; padding: 0 2px; font: inherit; outline: 0; }
  .search input::placeholder { color: #666; opacity: 1; }
  .search button { width: 16px; }
  .navtabs { display: flex; padding-top: 15px; }
  .navtabs button { height: 22px; padding: 0 12px; border-right: 1px solid #ddd; }
  .navtabs button:first-child { padding-left: 1px; }
  .navtabs button:last-child { border: 0; }
  .navtabs .cur { color: #2b579a; font-weight: 700; }
  .hint { padding-top: 31px; display: flex; flex-direction: column; gap: 16px; margin-right: -3px; line-height: 15px; }

  .vcol { flex: 0 0 27px; display: flex; flex-direction: column; padding-top: 2px; gap: 17px; }
  .tabstop { flex: none; width: 27px; height: 27px; box-sizing: border-box; border: 3px solid #d4d4d4; background: #fcfcfc; padding: 4px 0 0 3px; }
  .vruler { margin-left: 5px; }
  .rnum { font: 10px "Liberation Sans", sans-serif; fill: #444; }
  .canvas { flex: 1; min-width: 0; display: flex; flex-direction: column; align-items: center; padding-top: 2px; gap: 13px; }
  article { flex: none; width: 710px; box-sizing: border-box; background: #fff; border: 1px solid #c6c6c6; padding: 64px 102px 60px 107px; }
  .corners { display: flex; justify-content: space-between; margin: 0 -18px 0 -21px; height: 21px; }
  .corners i { width: 20px; border: 0 solid #ababab; border-bottom-width: 1px; }
  .tl.tl { border-right-width: 1px; }
  .tr.tr { border-left-width: 1px; }
  .doc { padding-top: 1px; font: 300 14px/37px Roboto, "Noto Sans CJK SC", sans-serif; color: #111; }
  .doc p { margin-bottom: 1px; text-indent: 25px; }
  .line { display: block; text-align-last: justify; white-space: pre; }
  .line + .line { text-indent: 0; }
  .line.last { text-align-last: left; }
  .half { font-feature-settings: "halt"; }
  .sel { background: #c6c6c6; padding: 10px 0 11px; }

  .scrollbar { flex: 0 0 15px; display: flex; flex-direction: column; margin: 4px 1px 3px 0; background: #dadada; }
  .scrollbar button { height: 14px; box-sizing: border-box; border: 1px solid #ababab; background: #fff; }
  .scrollbar .down { margin-top: auto; }
  .thumb { height: 25%; box-sizing: border-box; border: 1px solid #ababab; background: #fff; }

  .status { position: relative; flex: none; display: flex; align-items: center; gap: 21px; height: 21px; line-height: 18px; padding: 0 27px 0 7px; background: #f1f1f1; border-top: 1px solid #c0c0c0; }
  .status span, .pct { padding-bottom: 2px; }
  .right { margin-left: auto; display: flex; align-items: center; }
  .views { display: flex; height: 21px; margin-right: 2px; }
  .views button { width: 38px; }
  .zoombtn { width: 14px; }
  .zoom { width: 100px; margin: 0; appearance: none; height: 12px; background: linear-gradient(#999, #999) center / 100% 1px no-repeat, linear-gradient(#999, #999) center / 1px 7px no-repeat; }
  .zoom::-webkit-slider-thumb { appearance: none; width: 5px; height: 11px; background: #555; }
  .pct { margin-left: 13px; }

  .caret { position: absolute; left: 1349px; top: 576px; }
  .ime { position: absolute; left: 298px; bottom: 35px; display: flex; align-items: flex-end; }
  .sogou { z-index: 1; }
  .imebar { display: flex; gap: 8px; align-items: center; height: 24px; margin-left: -14px; padding: 0 4px 0 16px; background: #fff; border: 1px solid #b5cdeb; }
  .ime .imebar button { width: 16px; }
  .mark { position: absolute; right: 10px; bottom: 8px; display: flex; pointer-events: none; opacity: .8; }
  .mark div { display: flex; flex-direction: column; }
  .mark strong { font: 700 21px/24px "Noto Sans CJK SC", sans-serif; color: #3f86cf; }
  .mark span { font: 15px/18px "DejaVu Sans", sans-serif; color: #45b968; }
</style>
